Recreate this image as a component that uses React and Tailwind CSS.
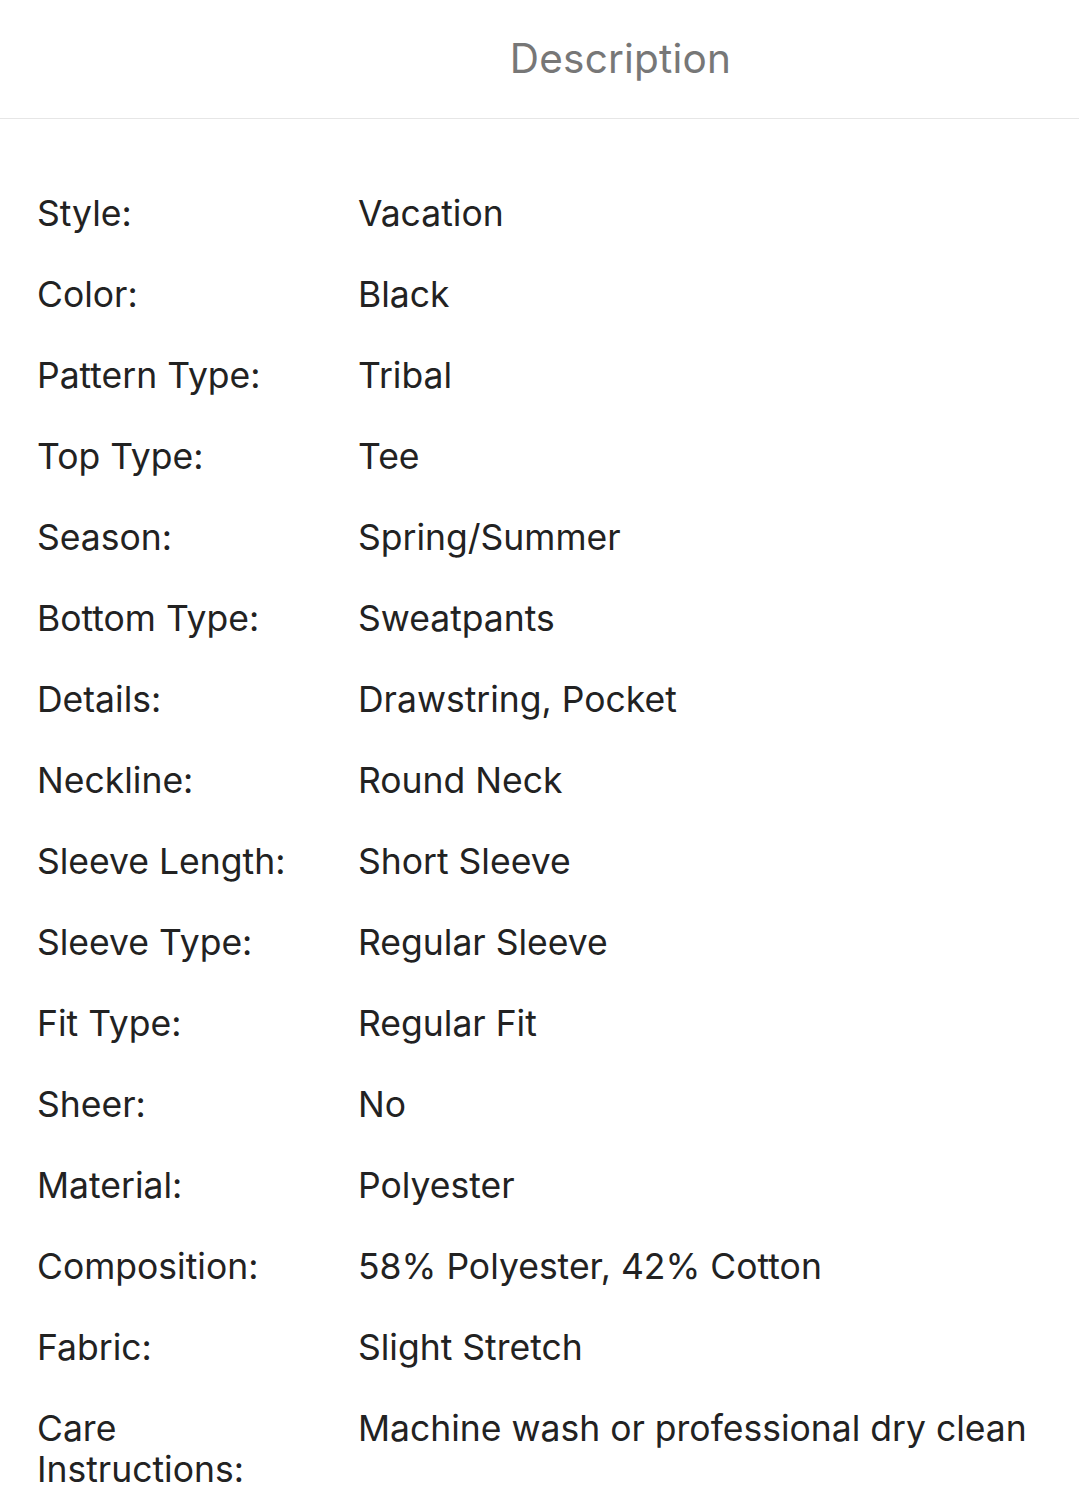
const rows = [
  ['Style:', 'Vacation'],
  ['Color:', 'Black'],
  ['Pattern Type:', 'Tribal'],
  ['Top Type:', 'Tee'],
  ['Season:', 'Spring/Summer'],
  ['Bottom Type:', 'Sweatpants'],
  ['Details:', 'Drawstring, Pocket'],
  ['Neckline:', 'Round Neck'],
  ['Sleeve Length:', 'Short Sleeve'],
  ['Sleeve Type:', 'Regular Sleeve'],
  ['Fit Type:', 'Regular Fit'],
  ['Sheer:', 'No'],
  ['Material:', 'Polyester'],
  ['Composition:', '58% Polyester, 42% Cotton'],
  ['Fabric:', 'Slight Stretch'],
  ['Care Instructions:', 'Machine wash or professional dry clean'],
];

export default function App() {
  return (
    <div className="w-[1079px] h-[1510px] overflow-hidden bg-white font-['Inter',sans-serif]">
      {/* Header */}
      <div className="h-[119px] flex items-center justify-center border-b border-[#e6e6e6] pl-[162px]">
        <h1 className="text-[40.5px] text-[#777777] tracking-[0.2px]">Description</h1>
      </div>

      {/* Spec rows */}
      <div className="pt-[74px] px-[37px] text-[35.5px] leading-[41px] text-[#222222]">
        {rows.map(([label, value]) => (
          <div key={label} className="flex gap-[41px] pb-[40px]">
            <div className="w-[280px] shrink-0">{label}</div>
            <div className="flex-1">{value}</div>
          </div>
        ))}
      </div>
    </div>
  );
}
